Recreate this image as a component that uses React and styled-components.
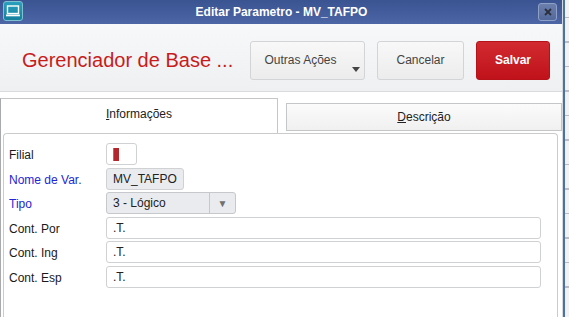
import styled, { createGlobalStyle } from "styled-components";

const Global = createGlobalStyle`
	html, body {
		margin: 0;
		padding: 0;
		background: #ffffff;
	}
	body {
		font-family: "Liberation Sans", Arial, sans-serif;
		font-size: 12px;
		color: #222;
	}
`;

const fields = [
	{ label: "Cont. Por", value: ".T." },
	{ label: "Cont. Ing", value: ".T." },
	{ label: "Cont. Esp", value: ".T." },
];

const App = () => {
	return (
		<>
			<Global />
			<Screen>
				<Dialog>
					<TitleBar>
						<AppIcon>
							<svg width="14" height="12" viewBox="0 0 14 12">
								<rect x="1.5" y="1" width="11" height="7.5" fill="none" stroke="#fff" strokeWidth="1.4" />
								<rect x="0" y="9.5" width="14" height="1.8" fill="#fff" />
							</svg>
						</AppIcon>
						<Caption>Editar Parametro - MV_TAFPO</Caption>
						<CloseButton>
							<svg width="8" height="8" viewBox="0 0 8 8">
								<path d="M1 1 L7 7 M7 1 L1 7" stroke="#2b2f3a" strokeWidth="1.8" />
							</svg>
						</CloseButton>
					</TitleBar>

					<Header>
						<Heading>Gerenciador de Base ...</Heading>
						<Actions>
							<Button $width={115} $menu>
								Outras Ações
								<Caret />
							</Button>
							<Button $width={87}>Cancelar</Button>
							<Button $width={74} $primary>
								Salvar
							</Button>
						</Actions>
					</Header>

					<Tabs>
						<Tab $active>
							<u>I</u>nformações
						</Tab>
						<Tab>
							<u>D</u>escrição
						</Tab>
					</Tabs>

					<Frame>
						<Panel>
							<Label>Filial</Label>
							<Input $width={31}>
								<Marker />
							</Input>

							<Label $blue>Nome de Var.</Label>
							<Input $width={78} $readonly>
								MV_TAFPO
							</Input>

							<Label $blue>Tipo</Label>
							<Select>
								<span>3 - Lógico</span>
								<SelectArrow>▼</SelectArrow>
							</Select>

							{fields.map((f) => (
								<Row key={f.label}>
									<Label>{f.label}</Label>
									<Input>{f.value}</Input>
								</Row>
							))}
						</Panel>
					</Frame>
				</Dialog>
				<Behind />
			</Screen>
		</>
	);
};

const Screen = styled.div`
	display: flex;
	width: 569px;
	height: 317px;
	overflow: hidden;
`;

const Dialog = styled.div`
	width: 563px;
	display: flex;
	flex-direction: column;
	background: #fff;
	border-right: 1px solid #d6d8dc;
	box-sizing: border-box;
`;

const Behind = styled.div`
	flex: 1;
	border-left: 2px solid #4a72a8;
	background: repeating-linear-gradient(
		to bottom,
		#f2f2f2 0px,
		#f2f2f2 23px,
		#b9bcc2 23px,
		#b9bcc2 24.5px
	);
	background-position: 0 -6px;
`;

const TitleBar = styled.div`
	height: 24px;
	display: flex;
	align-items: center;
	padding: 0 5px 0 3px;
	background: linear-gradient(#3a5391, #4c66a6);
	flex-shrink: 0;
`;

const AppIcon = styled.div`
	width: 18px;
	height: 18px;
	margin-bottom: 2px;
	border: 1px solid #7fc0d0;
	border-radius: 3px;
	background: linear-gradient(#2aa0bd, #16809e);
	display: flex;
	align-items: center;
	justify-content: center;
`;

const Caption = styled.div`
	flex: 1;
	text-align: center;
	color: #fff;
	font-weight: bold;
	font-size: 12px;
	padding-left: 2px;
`;

const CloseButton = styled.div`
	width: 17px;
	height: 16px;
	border: 1px solid #8fa0c6;
	border-radius: 3px;
	background: linear-gradient(#6b7fad, #53689b);
	display: flex;
	align-items: center;
	justify-content: center;
`;

const Header = styled.div`
	height: 68px;
	box-sizing: border-box;
	display: flex;
	align-items: center;
	padding: 17px 12px 11px 22px;
	background: linear-gradient(#f7f8f9, #eef0f1);
	border-bottom: 1px solid #d9dbdd;
	flex-shrink: 0;
`;

const Heading = styled.div`
	flex: 1;
	color: #c81c1c;
	font-size: 20px;
	white-space: nowrap;
`;

const Actions = styled.div`
	display: flex;
	gap: 12px;
`;

const Button = styled.div`
	position: relative;
	width: ${(p) => p.$width}px;
	height: 39px;
	box-sizing: border-box;
	border-radius: 3px;
	display: flex;
	align-items: center;
	justify-content: center;
	padding-bottom: 1px;
	padding-right: ${(p) => (p.$menu ? "14px" : "0")};
	font-size: 12px;
	color: ${(p) => (p.$primary ? "#fff" : "#444")};
	font-weight: ${(p) => (p.$primary ? "bold" : "normal")};
	border: 1px solid ${(p) => (p.$primary ? "#b5121a" : "#d2d4d6")};
	background: ${(p) =>
		p.$primary ? "linear-gradient(#d12a30, #c0121a)" : "linear-gradient(#f8f8f8, #ececec)"};
`;

const Caret = styled.span`
	position: absolute;
	right: 4px;
	bottom: 7px;
	border-left: 4px solid transparent;
	border-right: 4px solid transparent;
	border-top: 5px solid #444;
`;

const Tabs = styled.div`
	display: flex;
	align-items: flex-end;
	gap: 8px;
	margin-top: 6px;
	height: 35px;
	flex-shrink: 0;
`;

const Tab = styled.div`
	box-sizing: border-box;
	display: flex;
	align-items: center;
	justify-content: center;
	font-size: 12px;
	color: #222;
	width: ${(p) => (p.$active ? "279px" : "277px")};
	height: ${(p) => (p.$active ? "35px" : "28px")};
	border: 1px solid #c4c6c8;
	border-bottom: ${(p) => (p.$active ? "none" : "1px solid #c4c6c8")};
	border-left: ${(p) => (p.$active ? "1px solid #a8aaad" : "1px solid #c4c6c8")};
	background: ${(p) => (p.$active ? "#fff" : "linear-gradient(#fbfbfb, #f0f0f0)")};
	padding-bottom: ${(p) => (p.$active ? "4px" : "0")};
	margin-bottom: ${(p) => (p.$active ? "0" : "2px")};
	position: relative;
	z-index: ${(p) => (p.$active ? 1 : 0)};

	u {
		text-decoration-thickness: 1px;
	}
`;

const Frame = styled.div`
	flex: 1;
	border-left: 1px solid #a8aaad;
	padding: 0 4px 0 2px;
`;

const Panel = styled.div`
	height: 100%;
	box-sizing: border-box;
	border: 1px solid #c9cbcd;
	border-bottom: none;
	border-radius: 4px 4px 0 0;
	padding: 9px 16px 0 5px;
	display: grid;
	grid-template-columns: 97px 1fr;
	grid-auto-rows: 22px;
	row-gap: 2.6px;
	align-content: start;
	align-items: center;
`;

const Row = styled.div`
	display: contents;
`;

const Label = styled.div`
	font-size: 12px;
	color: ${(p) => (p.$blue ? "#2424d8" : "#1a1a1a")};
	padding-top: 2px;
`;

const Input = styled.div`
	width: ${(p) => (p.$width ? `${p.$width}px` : "auto")};
	height: 22px;
	box-sizing: border-box;
	border: 1px solid #cfd1d3;
	border-radius: 3px;
	background: ${(p) => (p.$readonly ? "#e9ebef" : "#fff")};
	display: flex;
	align-items: center;
	padding-left: 6px;
	font-size: 12px;
	color: #222;
`;

const Marker = styled.span`
	display: block;
	width: 5px;
	height: 13px;
	background: #b3262c;
	border-left: 1px solid #3a9aa8;
`;

const Select = styled.div`
	width: 130px;
	height: 22px;
	box-sizing: border-box;
	border: 1px solid #c6c8cb;
	border-radius: 3px;
	background: #e9ebef;
	display: flex;
	align-items: center;
	font-size: 12px;
	color: #222;

	span:first-child {
		flex: 1;
		padding-left: 6px;
	}
`;

const SelectArrow = styled.span`
	width: 25px;
	height: 100%;
	border-left: 1px solid #c6c8cb;
	display: flex;
	align-items: center;
	justify-content: center;
	font-size: 10px;
	color: #707070;
`;

export default App;
